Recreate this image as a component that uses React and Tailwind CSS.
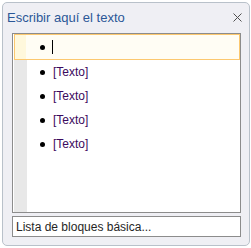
const ROWS = ['[Texto]', '[Texto]', '[Texto]', '[Texto]']

function Bullet() {
  return <div className="w-[5px] h-[5px] rounded-full bg-black shrink-0" />
}

export default function App() {
  return (
    <div className="w-[251px] h-[248px] bg-white pt-[2px] pl-[2px]" style={{ fontFamily: '"Liberation Sans", Arial, sans-serif' }}>
      <div className="w-[248px] h-[244px] border border-[#b9c1ca] rounded-[5px] bg-[#efeff4] flex flex-col">
        {/* Title bar */}
        <div className="h-[28px] mb-[2px] flex items-center justify-between pl-[4px] pr-[7px]">
          <span className="text-[13px] text-[#2b5797] leading-none">Escribir aquí el texto</span>
          <svg width="9" height="9" viewBox="0 0 9 9" className="text-[#505050]">
            <path d="M0.5 0.5 L8.5 8.5 M8.5 0.5 L0.5 8.5" stroke="currentColor" strokeWidth="1" />
          </svg>
        </div>

        {/* Text pane */}
        <div className="ml-[9px] w-[229px] h-[180px] border border-[#8c8c8c] bg-white flex flex-col">
          <div className="ml-px h-[26px] border border-[#fcc86f] flex items-center bg-[#fffdf4]">
            <div className="w-[11px] self-stretch bg-[#fff8dc]" />
            <div className="pl-[14px] flex items-center gap-[7px]">
              <Bullet />
              <div className="w-px h-[14px] bg-black" />
            </div>
          </div>
          <div className="flex-1 flex">
            <div className="ml-px w-[13px] bg-[#e8e8e8]" />
            <div className="flex flex-col">
              {ROWS.map((t, i) => (
                <div key={i} className="h-[24px] pl-[13px] flex items-center gap-[8px]">
                  <Bullet />
                  <span className="text-[12px] text-[#3c0a5e] leading-none">{t}</span>
                </div>
              ))}
            </div>
          </div>
        </div>

        {/* Footer */}
        <div className="ml-[9px] mt-[3px] w-[229px] h-[21px] border border-[#8c8c8c] bg-white flex items-center pl-[3px]">
          <span className="text-[12px] text-[#262626] leading-none">Lista de bloques básica...</span>
        </div>
      </div>
    </div>
  )
}
